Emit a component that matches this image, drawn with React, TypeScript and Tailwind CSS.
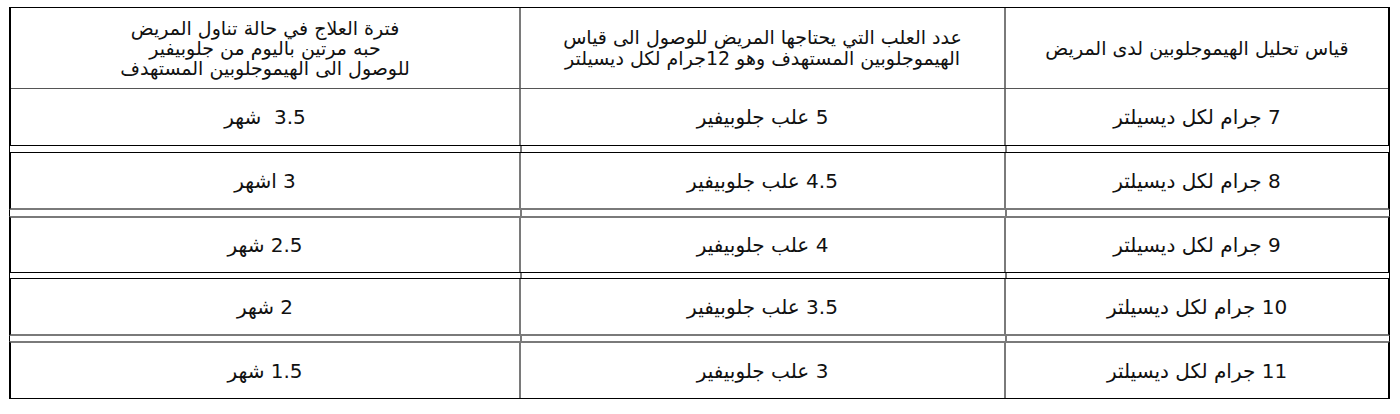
const rows = [
  { a: '7 جرام لكل ديسيلتر', b: '5 علب جلوبيفير', c: '3.5  شهر', h: 'h-[56px]', top: '', bottom: 'border-b border-b-black' },
  { a: '8 جرام لكل ديسيلتر', b: '4.5 علب جلوبيفير', c: '3 اشهر', h: 'h-[55px]', top: 'border-t border-t-black', bottom: 'border-b-2 border-b-[#7a7a7a]' },
  { a: '9 جرام لكل ديسيلتر', b: '4 علب جلوبيفير', c: '2.5 شهر', h: 'h-[54px]', top: 'border-t-2 border-t-[#7a7a7a]', bottom: 'border-b border-b-black' },
  { a: '10 جرام لكل ديسيلتر', b: '3.5 علب جلوبيفير', c: '2 شهر', h: 'h-[55px]', top: 'border-t border-t-black', bottom: 'border-b-2 border-b-[#7a7a7a]' },
  { a: '11 جرام لكل ديسيلتر', b: '3 علب جلوبيفير', c: '1.5 شهر', h: 'h-[55px]', top: 'border-t-2 border-t-[#7a7a7a]', bottom: 'border-b border-b-black' },
];

const cols = 'grid grid-cols-[384px_485px_1fr]';

const Cells = ({ a, b, c, h }: { a: React.ReactNode; b: React.ReactNode; c: React.ReactNode; h: string }) => (
  <div className={`${cols} ${h}`}>
    <div className="flex items-center justify-center border-l-2 border-l-[#7a7a7a] text-center">{a}</div>
    <div className="flex items-center justify-center border-l-2 border-l-[#7a7a7a] text-center">{b}</div>
    <div className="flex items-center justify-center text-center">{c}</div>
  </div>
);

const Gap = ({ h }: { h: string }) => (
  <div className={`${cols} ${h} border-x border-x-black`}>
    <div className="border-l-2 border-l-[#7a7a7a]" />
    <div className="border-l-2 border-l-[#7a7a7a]" />
    <div />
  </div>
);

const gaps = ['h-[6px]', 'h-[6px]', 'h-[5px]', 'h-[5px]'];

export default function App() {
  return (
    <div
      dir="rtl"
      className="min-h-[414px] bg-white pt-[7px] text-[20px] leading-[16px] text-[#111]"
      style={{ fontFamily: '"DejaVu Sans", "Noto Sans", sans-serif' }}
    >
      <div className="mr-[10px] w-[1381px]">
        {rows.map((r, i) => (
          <div key={i}>
            <div className={`border-x-2 border-x-black ${r.top} ${r.bottom} ${i === 0 ? 'border-t border-t-black' : ''}`}>
              {i === 0 && (
                <div className="border-b border-b-[#555]">
                  <Cells
                    h="h-[80px]"
                    a={<span className="text-[19px]">قياس تحليل الهيموجلوبين لدى المريض</span>}
                    b={
                      <div className="text-[19px] leading-[21px]">
                        عدد العلب التي يحتاجها المريض للوصول الى قياس
                        <br />
                        الهيموجلوبين المستهدف وهو 12جرام لكل ديسيلتر
                      </div>
                    }
                    c={
                      <div className="text-[19px] leading-[20px]">
                        فترة العلاج في حالة تناول المريض
                        <br />
                        حبه مرتين باليوم من جلوبيفير
                        <br />
                        للوصول الى الهيموجلوبين المستهدف
                      </div>
                    }
                  />
                </div>
              )}
              <Cells h={r.h} a={r.a} b={r.b} c={<span className="whitespace-pre">{r.c}</span>} />
            </div>
            {i < rows.length - 1 && <Gap h={gaps[i]} />}
          </div>
        ))}
      </div>
    </div>
  );
}
